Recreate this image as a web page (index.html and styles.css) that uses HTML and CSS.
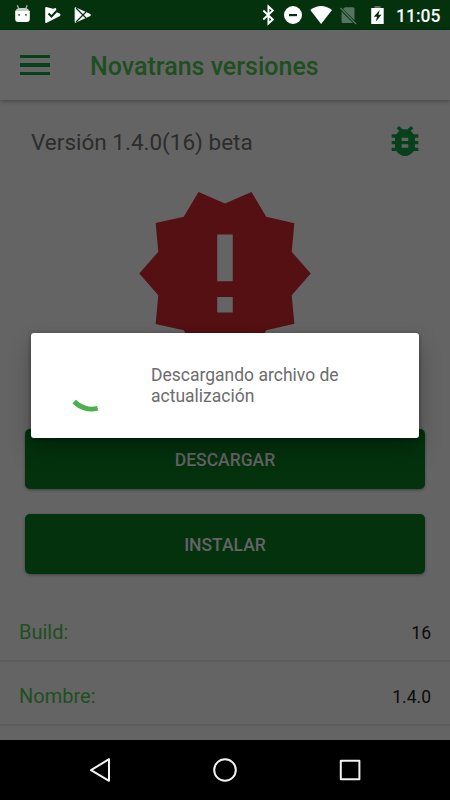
FILE: index.html
```html
<!DOCTYPE html>
<html lang="es">
<head>
<meta charset="utf-8">
<title>Novatrans versiones</title>
<link rel="stylesheet" href="styles.css">
</head>
<body>
<div class="screen">
  <header class="status">
    <svg class="notifications" width="100" height="30" viewBox="0 0 100 30" fill="#fff">
      <path d="M17.300 5.300l1.700 4M27.200 5.300l-1.700 4" stroke="#9bb09e" stroke-width="1.400"/>
      <path d="M15.300 11.500q.5-3.500 5-3.500h4q4.500 0 5.300 3.500z" fill="#c3cfc5"/>
      <path d="M15.200 11h14.600v8q0 3-3 3h-8.600q-3 0-3-3z"/>
      <path d="M18.200 13.900h1.800v1.800h-1.800zM25 13.900h1.800v1.800H25z" fill="#53735a"/>
      <path d="M46.200 7q-1 0-1 1v14q0 1.500 1.500.7L60 16q1.200-1 0-2.200l-3-1.500-1-4.300-3 .800z"/>
      <path d="M48.500 13.500l3 3 7-7.500" fill="none" stroke="#03320d" stroke-width="2"/>
      <path d="M75.500 7.300q-.800 0-.800 1v13.500q0 1.200 1.300.700L90.300 16q1.300-1 0-2z"/>
      <path d="M76 8l10 10M76 22l10-10" stroke="#03320d" stroke-width="1.200"/>
    </svg>
    <svg class="indicators" width="130" height="30" viewBox="260 0 130 30" fill="#fff">
      <path d="M263.300 10.500l9.500 9-4.400 4V6.500l4.400 4-9.500 9" fill="none" stroke="#fff" stroke-width="1.900"/>
      <circle cx="293" cy="15" r="9"/>
      <path d="M289 14h8v2.200h-8z" fill="#03320d"/>
      <path d="M310.300 10q10.700-8 21.700 0l-10.900 14z"/>
      <path d="M345 7.200h8q1.500 0 1.500 1.500v11.600L343 9zM341.500 11.500L353 23h-10q-1.500 0-1.500-1.500z" fill="#557460"/>
      <path d="M340.500 8L356 24" stroke="#557460" stroke-width="1.500"/>
      <path d="M374.500 6h6v2h-6z" fill="#557460"/>
      <path d="M371.200 8h12.500v16h-12.500z"/>
      <path d="M379.700 10l-6 6.700h3.300l-1.200 5 5.700-7h-3z" fill="#03320d"/>
    </svg>
    <span class="clock">11:05</span>
  </header>

  <div class="toolbar">
    <div class="menu"><i></i><i></i><i></i></div>
    <h1 class="title">Novatrans versiones</h1>
  </div>

  <main class="content">
    <div class="version">
      <span>Versión 1.4.0(16) beta</span>
      <svg class="bug" width="40" height="40" viewBox="0 0 24 24"><path fill="#07411b" d="M20 8h-2.810c-.450-.780-1.070-1.450-1.820-1.960L17 4.410 15.590 3l-2.170 2.170C12.960 5.060 12.490 5 12 5c-.490 0-.960.060-1.410.170L8.410 3 7 4.410l1.620 1.630C7.880 6.550 7.260 7.220 6.810 8H4v2h2.090c-.050.330-.090.660-.090 1v1H4v2h2v1c0 .340.040.670.090 1H4v2h2.810c1.040 1.790 2.970 3 5.190 3s4.150-1.210 5.190-3H20v-2h-2.090c.050-.330.090-.660.090-1v-1h2v-2h-2v-1c0-.340-.040-.670-.090-1H20V8zm-6 8h-4v-2h4v2zm0-4h-4v-2h4v2z"/></svg>
    </div>
    <svg class="alert" width="188" height="187" viewBox="0 0 24 24"><path fill="#541012" d="M23 12l-2.440-2.780.340-3.680-3.610-.820-1.890-3.180L12 3 8.600 1.540 6.710 4.720l-3.610.810.340 3.680L1 12l2.440 2.780-.340 3.690 3.610.820 1.890 3.180L12 21l3.400 1.460 1.890-3.180 3.610-.820-.340-3.680L23 12zm-10 5h-2v-2h2v2zm0-4h-2V7h2v6z"/></svg>
    <div class="actions">
      <button class="btn">DESCARGAR</button>
      <button class="btn">INSTALAR</button>
    </div>
    <dl class="details">
      <div class="row"><dt>Build:</dt><dd>16</dd></div>
      <div class="row"><dt>Nombre:</dt><dd>1.4.0</dd></div>
    </dl>
  </main>

  <nav class="navbar">
    <svg width="450" height="60" viewBox="0 0 450 60" fill="none" stroke="#f2f2f2" stroke-width="2" stroke-linejoin="round">
      <path d="M109 19.200v21.600L91 30.200z"/>
      <circle cx="225" cy="30" r="10.800"/>
      <path d="M340.800 20.700h18.600v18.600h-18.600z"/>
    </svg>
  </nav>

  <div class="dialog" role="dialog">
    <svg class="spinner" width="60" height="60" viewBox="0 0 60 60"><path d="M13.200 46.500A23.750 23.750 0 0 0 36.700 53.300" fill="none" stroke="#4caf50" stroke-width="4.800"/></svg>
    <p>Descargando archivo de actualización</p>
  </div>
</div>
</body>
</html>
```

FILE: styles.css
```css
* {
  box-sizing: border-box;
}

body {
  margin: 0;
  font-family: Roboto, "Liberation Sans", sans-serif;
}

.screen {
  position: relative;
  display: flex;
  flex-direction: column;
  width: 450px;
  height: 800px;
  overflow: hidden;
  background: #646464;
}

.status {
  flex: none;
  display: flex;
  align-items: center;
  height: 30px;
  background: #03320d;
}

.indicators {
  margin-left: 160px;
}

.clock {
  margin: 2px 0 0 6px;
  color: #fff;
  font-size: 17.5px;
  font-weight: 500;
  line-height: 28px;
}

.toolbar {
  flex: none;
  display: flex;
  align-items: center;
  height: 70px;
  padding: 2px 20px 0;
  gap: 40px;
  background: #666;
  box-shadow: 0 1px 4px rgba(0, 0, 0, 0.35);
}

.menu {
  display: flex;
  flex-direction: column;
  gap: 5px;
  width: 30px;
  margin-top: -2px;
}

.menu i {
  height: 3.4px;
  background: #07411b;
}

.title {
  margin: 0;
  color: #1e4f20;
  font-size: 25px;
  font-weight: 500;
}

.content {
  flex: 1;
  min-height: 0;
  overflow: hidden;
  display: flex;
  flex-direction: column;
  margin-top: 1px;
}

.version {
  flex: none;
  display: flex;
  align-items: center;
  justify-content: space-between;
  height: 79px;
  padding: 3px 25px 0 31px;
  color: #2c2c2c;
  font-size: 22.5px;
}

.bug {
  margin-bottom: 2px;
}

.alert {
  flex: none;
  align-self: center;
}

.actions {
  flex: none;
  display: flex;
  flex-direction: column;
  gap: 25px;
  padding: 62px 25px 0;
}

.btn {
  height: 60px;
  padding: 1px 0 0;
  border: 0;
  border-radius: 5px;
  background: #03320d;
  color: #646464;
  font: 500 17.5px Roboto, sans-serif;
  box-shadow: 0 1px 3px rgba(0, 0, 0, 0.35);
}

.details {
  flex: none;
  margin: 23px 0 0;
}

.row {
  display: flex;
  align-items: center;
  justify-content: space-between;
  height: 64.500px;
  padding: 7px 19px 0;
  border-bottom: 2px solid #5a5c5c;
}

.row dt {
  color: #1e4f20;
  font-size: 20px;
}

.row dd {
  margin: 2px 0 0;
  color: #0c0c0c;
  font-size: 17.500px;
}

.navbar {
  flex: none;
  height: 60px;
  background: #000;
}

.dialog {
  position: absolute;
  top: 332.5px;
  left: 31px;
  display: flex;
  align-items: center;
  gap: 30px;
  width: 388px;
  height: 105px;
  padding-left: 30px;
  border-radius: 3px;
  background: #fff;
  color: #6c6c6c;
  box-shadow: 0 12px 22px rgba(0, 0, 0, 0.25), 0 1px 4px rgba(0, 0, 0, 0.4);
}

.dialog p {
  width: 220px;
  margin: 1px 0 0;
  font-size: 17.500px;
  line-height: 20.500px;
}
```
